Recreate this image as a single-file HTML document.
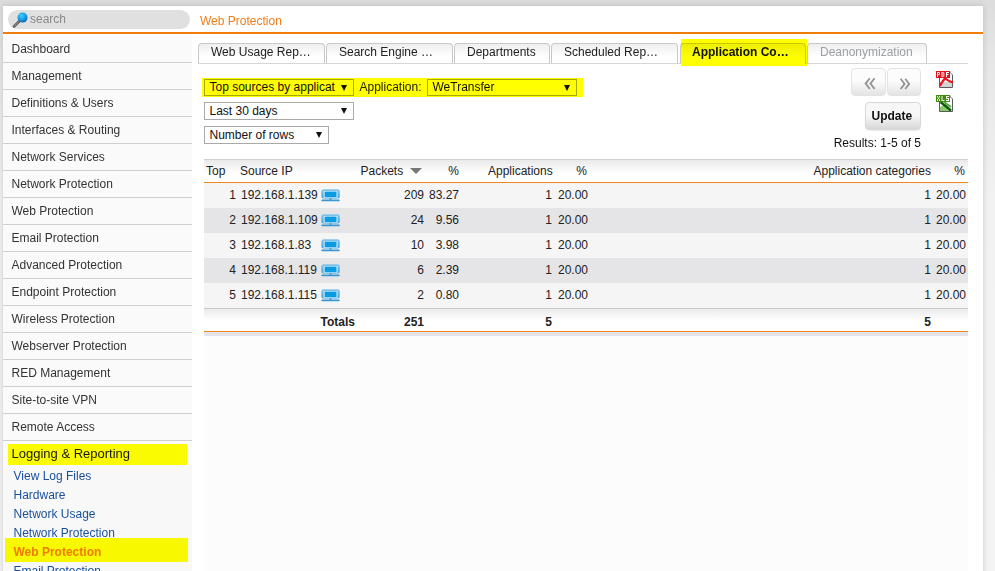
<!DOCTYPE html>
<html><head><meta charset="utf-8">
<style>
*{margin:0;padding:0;box-sizing:border-box}
html,body{width:995px;height:571px;overflow:hidden}
body{background:linear-gradient(#dcdcdc 0px,#e6e6e6 60px,#f2f2f2 200px,#f4f4f4 571px);font-family:"Liberation Sans",sans-serif;font-size:12px;color:#222;position:relative}
.a{position:absolute;white-space:nowrap}
#panel{position:absolute;left:3px;top:6px;width:980px;height:600px;background:#fff;box-shadow:0 0 6px rgba(0,0,0,.16)}
#search{left:8px;top:10px;width:182px;height:19px;border-radius:10px;background:#e0e0e0}
#stext{left:30px;top:11px;line-height:16px;color:#8a8a8a}
#title{left:200px;top:13px;line-height:17px;color:#ee7d1b}
#oline{left:3px;top:32px;width:980px;height:2px;background:#ef7d0a}
#side{left:3px;top:36px;width:189px;height:540px;background:#fafafa}
.it{position:absolute;left:3px;width:189px;height:27px;border-bottom:1px solid #cfcfcf;padding-left:8.5px;line-height:26px;color:#333}
.sub{position:absolute;left:13.5px;line-height:19px;color:#1a4f9e}
.hl{position:absolute;background:#ffff00;mix-blend-mode:multiply}
.tab{position:absolute;top:43px;height:20px;border:1px solid #c9c9c9;border-bottom:none;border-radius:4px 4px 0 0;background:linear-gradient(#efefef,#fff 70%);text-align:left;padding-left:12px;line-height:16px;color:#222}
#tline{left:198px;top:63px;width:770px;height:1px;background:#d6d6d6}
.sel{position:absolute;height:18px;border:1px solid #a9a9a9;background:#fff;line-height:15px;padding-left:4.5px;color:#111}
.sel i{position:absolute;right:6px;top:5px;width:0;height:0;border-left:3.5px solid transparent;border-right:3.5px solid transparent;border-top:6px solid #111}
.btn{position:absolute;border:1px solid #e4e4e4;border-radius:4px;background:linear-gradient(#fcfcfc 45%,#e3e3e3)}
.t{position:absolute;white-space:nowrap;line-height:14px}
.r{text-align:right}
.row{position:absolute;left:204px;width:764px;height:25px}
</style></head><body>
<div id="panel"></div>
<div class="a" id="search"></div>
<svg class="a" style="left:12px;top:11px" width="20" height="18" viewBox="0 0 20 18">
 <defs><radialGradient id="bg1" cx="0.4" cy="0.3" r="0.7"><stop offset="0" stop-color="#3fd0ff"/><stop offset="0.6" stop-color="#1a9ae0"/><stop offset="1" stop-color="#0a6cb8"/></radialGradient></defs>
 <line x1="2" y1="15.5" x2="7" y2="10.5" stroke="#555" stroke-width="2.6" stroke-linecap="round"/>
 <line x1="2" y1="15.5" x2="7" y2="10.5" stroke="#aaa" stroke-width="1"/>
 <circle cx="10.5" cy="6.6" r="5" fill="url(#bg1)"/>
</svg>
<div class="a" id="stext">search</div>
<div class="a" id="title">Web Protection</div>
<div class="a" id="oline"></div>
<div class="a" id="side"></div>

<div class="it" style="top:36px">Dashboard</div>
<div class="it" style="top:63px">Management</div>
<div class="it" style="top:90px">Definitions &amp; Users</div>
<div class="it" style="top:117px">Interfaces &amp; Routing</div>
<div class="it" style="top:144px">Network Services</div>
<div class="it" style="top:171px">Network Protection</div>
<div class="it" style="top:198px">Web Protection</div>
<div class="it" style="top:225px">Email Protection</div>
<div class="it" style="top:252px">Advanced Protection</div>
<div class="it" style="top:279px">Endpoint Protection</div>
<div class="it" style="top:306px">Wireless Protection</div>
<div class="it" style="top:333px">Webserver Protection</div>
<div class="it" style="top:360px">RED Management</div>
<div class="it" style="top:387px">Site-to-site VPN</div>
<div class="it" style="top:414px">Remote Access</div>

<div class="a" style="left:3px;top:466px;width:189px;height:110px;background:#f8f8f8"></div>
<div class="a" style="left:11.5px;top:444px;line-height:19px;font-size:13px;color:#1a1a1a">Logging &amp; Reporting</div>
<div class="hl" style="left:8px;top:444px;width:179px;height:21px"></div>
<div class="sub" style="top:467px">View Log Files</div>
<div class="sub" style="top:486px">Hardware</div>
<div class="sub" style="top:505px">Network Usage</div>
<div class="sub" style="top:524px">Network Protection</div>
<div class="sub" style="top:543px;font-weight:bold;color:#f07b00">Web Protection</div>
<div class="hl" style="left:5px;top:538px;width:183px;height:24px"></div>
<div class="sub" style="top:562px">Email Protection</div>

<!-- tabs -->
<div class="a" id="tline"></div>
<div class="tab" style="left:198px;width:127px">Web Usage Rep…</div>
<div class="tab" style="left:326px;width:127px">Search Engine …</div>
<div class="tab" style="left:454px;width:96px">Departments</div>
<div class="tab" style="left:551px;width:127px">Scheduled Rep…</div>
<div class="tab" style="left:680px;width:126px;height:21px;padding-left:11px;font-weight:bold;color:#111">Application Co…</div>
<div class="tab" style="left:807px;width:120px;color:#9b9ea3">Deanonymization</div>
<div class="hl" style="left:681px;top:39px;width:126px;height:27px"></div>

<!-- controls -->
<div class="sel" style="left:204px;top:79px;width:150px;height:17px">Top sources by applicat<i></i></div>
<div class="t" style="left:359.5px;top:80px">Application:</div>
<div class="sel" style="left:427px;top:79px;width:150px;height:17px">WeTransfer<i></i></div>
<div class="hl" style="left:202px;top:78px;width:381px;height:19px"></div>
<div class="sel" style="left:204px;top:102px;width:150px;line-height:17px">Last 30 days<i></i></div>
<div class="sel" style="left:204px;top:126px;width:125px;line-height:17px">Number of rows<i></i></div>

<div class="btn" style="left:851px;top:68px;width:35px;height:28px"></div>
<div class="btn" style="left:887px;top:68px;width:34px;height:28px"></div>
<svg class="a" style="left:851px;top:68px" width="70" height="28" viewBox="851 68 70 28">
<path d="M869.8 78.3 L865.6 83.6 L869.8 88.9 M874.6 78.3 L870.4 83.6 L874.6 88.9" stroke="#939393" stroke-width="1.8" fill="none" stroke-linejoin="miter"/>
<path d="M900.6 78.8 L904.6 83.9 L900.6 89 M905.2 78.8 L909.2 83.9 L905.2 89" stroke="#939393" stroke-width="1.8" fill="none"/>
</svg>

<div class="btn" style="left:865px;top:102px;width:56px;height:28px;border-color:#d8d8d8;background:linear-gradient(#f7f7f7 50%,#d7d7d7);box-shadow:0 1px 1px rgba(0,0,0,.08)"></div>
<div class="t" style="left:871.5px;top:109px;font-weight:bold;color:#111">Update</div>
<div class="t r" style="left:800px;width:121px;top:136px;color:#111">Results: 1-5 of 5</div>

<!-- pdf icon -->
<svg class="a" style="left:934px;top:68px" width="22" height="22" viewBox="934 68 22 22">
 <path d="M939 72 H950 L953 75 V88 H939 Z" fill="#fff"/>
 <rect x="940" y="82" width="12" height="5" fill="#d4d4d4"/>
 <path d="M939.5 77 V87.5 H952.5 V74.5 L950 72" stroke="#5a5a5a" stroke-width="1" fill="none"/>
 <path d="M950 71.5 L951 74 L953 75" stroke="#9a9a9a" stroke-width="0.8" fill="#eee"/>
 <path d="M940 86 Q943 80 945.3 78.5 Q948 81 953 82.5" stroke="#f0141e" stroke-width="2.2" fill="none"/>
 <rect x="936" y="71" width="14" height="7" fill="#e2121a"/>
 <g fill="#fff">
  <rect x="937" y="72" width="1" height="5"/><rect x="938" y="72" width="1.5" height="1"/><rect x="939.2" y="72.5" width="0.8" height="1.8"/><rect x="938" y="74.2" width="1.5" height="1"/>
  <rect x="941.5" y="72" width="1" height="5"/><rect x="942.5" y="72" width="1" height="1"/><rect x="942.5" y="76" width="1" height="1"/><rect x="943.4" y="72.6" width="0.9" height="3.8"/>
  <rect x="946" y="72" width="1" height="5"/><rect x="947" y="72" width="2" height="1"/><rect x="947" y="74" width="1.5" height="1"/>
 </g>
</svg>
<svg class="a" style="left:934px;top:92px" width="22" height="22" viewBox="934 92 22 22">
 <path d="M939 96 H950 L953 99 V112 H939 Z" fill="#fff"/>
 <path d="M940 111 L940 107 L946 104 L952 111 Z" fill="#8ccc6a"/>
 <path d="M940.5 102 L951 110.5" stroke="#0e5a12" stroke-width="2.4" fill="none"/>
 <path d="M944 102 L951 107" stroke="#52a83a" stroke-width="2" fill="none"/>
 <path d="M939.5 101 V111.5 H952.5 V98.5 L950 96" stroke="#5a5a5a" stroke-width="1" fill="none"/>
 <path d="M950 95.5 L951 98 L953 99" stroke="#9a9a9a" stroke-width="0.8" fill="#eee"/>
 <rect x="936" y="95" width="14" height="7" fill="#3f8c0e"/>
 <g fill="#fff">
  <rect x="937" y="96" width="1" height="1.5"/><rect x="939" y="96" width="1" height="1.5"/><rect x="938" y="97.5" width="1" height="1.5"/><rect x="937" y="99" width="1" height="2"/><rect x="939" y="99" width="1" height="2"/>
  <rect x="941.5" y="96" width="1" height="5"/><rect x="942.5" y="100" width="2" height="1"/>
  <rect x="946" y="96" width="3" height="1"/><rect x="946" y="97" width="1" height="1"/><rect x="946" y="98" width="3" height="1"/><rect x="948" y="99" width="1" height="1"/><rect x="946" y="100" width="3" height="1"/>
 </g>
</svg>

<!-- table -->
<div class="a" style="left:204px;top:159px;width:764px;height:1px;background:#cfcfcf"></div>
<div class="a" style="left:204px;top:160px;width:764px;height:22px;background:linear-gradient(#e9e9e9,#fff 60%)"></div>
<div class="a" style="left:204px;top:182px;width:764px;height:1px;background:#ef8418"></div>
<div class="row" style="top:183px;background:#f5f5f5"></div>
<div class="row" style="top:208px;background:#e5e5e7"></div>
<div class="row" style="top:233px;background:#f5f5f5"></div>
<div class="row" style="top:258px;background:#e5e5e7"></div>
<div class="row" style="top:283px;background:#f5f5f5"></div>
<div class="a" style="left:204px;top:308px;width:764px;height:1px;background:#c8c8c8"></div>
<div class="a" style="left:204px;top:309px;width:764px;height:22px;background:linear-gradient(#ebebeb,#fff 55%)"></div>
<div class="a" style="left:204px;top:331px;width:764px;height:1px;background:#ef8418"></div>
<div class="a" style="left:204px;top:332px;width:764px;height:4px;background:#e4e4e8"></div>
<div class="a" style="left:204px;top:336px;width:764px;height:240px;background:#fcfcfc"></div>

<div class="t" style="left:206px;top:164px">Top</div>
<div class="t" style="left:240px;top:164px">Source IP</div>
<div class="t" style="left:360.5px;top:164px">Packets</div>
<svg class="a" style="left:410px;top:168px" width="12" height="6"><path d="M0 0H12L6 6Z" fill="#777"/></svg>
<div class="t r" style="left:400px;width:59px;top:164px">%</div>
<div class="t" style="left:488px;top:164px">Applications</div>
<div class="t r" style="left:540px;width:47px;top:164px">%</div>
<div class="t" style="left:813.5px;top:164px">Application categories</div>
<div class="t r" style="left:900px;width:65px;top:164px">%</div>
<svg width="0" height="0" style="position:absolute"><defs><g id="mon">
<linearGradient id="mg" x1="0" y1="0" x2="0" y2="1"><stop offset="0" stop-color="#86c6ea"/><stop offset="1" stop-color="#4aa3d8"/></linearGradient>
<rect x="0.3" y="0.2" width="18.5" height="9.4" rx="2.5" fill="url(#mg)"/>
<rect x="2.6" y="2" width="13.9" height="6.9" fill="#dff2fb"/>
<rect x="3.6" y="2.6" width="11.9" height="5.7" fill="#0a9be2"/>
<rect x="8.6" y="9.4" width="1.8" height="1.4" fill="#2a8cc8"/>
<rect x="0.3" y="10.5" width="18.5" height="1.7" rx="0.85" fill="#3a98d0"/>
</g></defs></svg>
<div class="t r" style="left:204px;width:32px;top:188px">1</div>
<div class="t" style="left:241px;top:188px">192.168.1.139</div>
<svg class="a mon" style="left:321px;top:189px" width="19" height="13"><use href="#mon"/></svg>
<div class="t r" style="left:380px;width:44px;top:188px">209</div>
<div class="t r" style="left:420px;width:39px;top:188px">83.27</div>
<div class="t r" style="left:520px;width:32px;top:188px">1</div>
<div class="t r" style="left:550px;width:38px;top:188px">20.00</div>
<div class="t r" style="left:900px;width:31px;top:188px">1</div>
<div class="t r" style="left:920px;width:46px;top:188px">20.00</div>
<div class="t r" style="left:204px;width:32px;top:213px">2</div>
<div class="t" style="left:241px;top:213px">192.168.1.109</div>
<svg class="a mon" style="left:321px;top:214px" width="19" height="13"><use href="#mon"/></svg>
<div class="t r" style="left:380px;width:44px;top:213px">24</div>
<div class="t r" style="left:420px;width:39px;top:213px">9.56</div>
<div class="t r" style="left:520px;width:32px;top:213px">1</div>
<div class="t r" style="left:550px;width:38px;top:213px">20.00</div>
<div class="t r" style="left:900px;width:31px;top:213px">1</div>
<div class="t r" style="left:920px;width:46px;top:213px">20.00</div>
<div class="t r" style="left:204px;width:32px;top:238px">3</div>
<div class="t" style="left:241px;top:238px">192.168.1.83</div>
<svg class="a mon" style="left:321px;top:239px" width="19" height="13"><use href="#mon"/></svg>
<div class="t r" style="left:380px;width:44px;top:238px">10</div>
<div class="t r" style="left:420px;width:39px;top:238px">3.98</div>
<div class="t r" style="left:520px;width:32px;top:238px">1</div>
<div class="t r" style="left:550px;width:38px;top:238px">20.00</div>
<div class="t r" style="left:900px;width:31px;top:238px">1</div>
<div class="t r" style="left:920px;width:46px;top:238px">20.00</div>
<div class="t r" style="left:204px;width:32px;top:263px">4</div>
<div class="t" style="left:241px;top:263px">192.168.1.119</div>
<svg class="a mon" style="left:321px;top:264px" width="19" height="13"><use href="#mon"/></svg>
<div class="t r" style="left:380px;width:44px;top:263px">6</div>
<div class="t r" style="left:420px;width:39px;top:263px">2.39</div>
<div class="t r" style="left:520px;width:32px;top:263px">1</div>
<div class="t r" style="left:550px;width:38px;top:263px">20.00</div>
<div class="t r" style="left:900px;width:31px;top:263px">1</div>
<div class="t r" style="left:920px;width:46px;top:263px">20.00</div>
<div class="t r" style="left:204px;width:32px;top:288px">5</div>
<div class="t" style="left:241px;top:288px">192.168.1.115</div>
<svg class="a mon" style="left:321px;top:289px" width="19" height="13"><use href="#mon"/></svg>
<div class="t r" style="left:380px;width:44px;top:288px">2</div>
<div class="t r" style="left:420px;width:39px;top:288px">0.80</div>
<div class="t r" style="left:520px;width:32px;top:288px">1</div>
<div class="t r" style="left:550px;width:38px;top:288px">20.00</div>
<div class="t r" style="left:900px;width:31px;top:288px">1</div>
<div class="t r" style="left:920px;width:46px;top:288px">20.00</div>
<div class="t r" style="left:300px;width:55px;top:315px;font-weight:bold">Totals</div>
<div class="t r" style="left:380px;width:44px;top:315px;font-weight:bold">251</div>
<div class="t r" style="left:520px;width:32px;top:315px;font-weight:bold">5</div>
<div class="t r" style="left:900px;width:31px;top:315px;font-weight:bold">5</div>
</body></html>
